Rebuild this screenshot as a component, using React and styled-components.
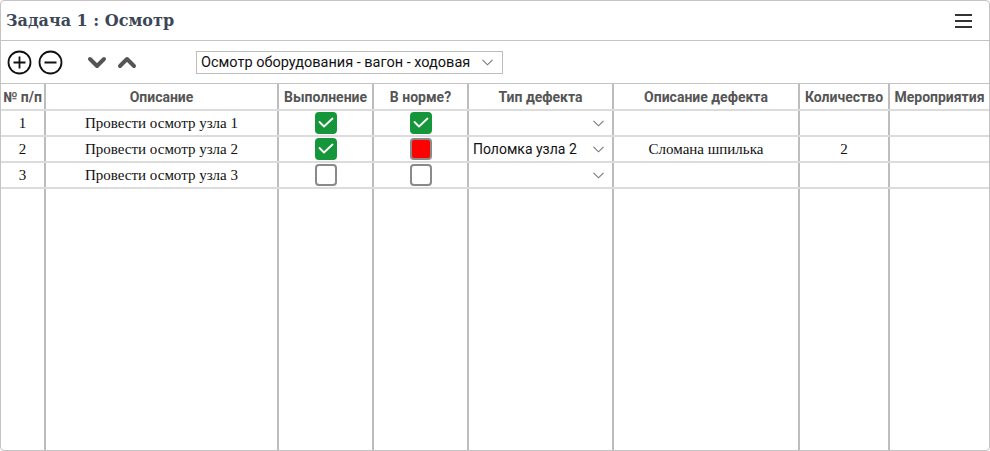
import React from 'react';
import styled, { createGlobalStyle } from 'styled-components';

const GlobalStyle = createGlobalStyle`
    html, body {
        margin: 0;
        padding: 0;
        background: #fff;
    }
    #root {
        height: 451px;
    }
`;

const Card = styled.section`
    box-sizing: border-box;
    height: 451px;
    width: 990px;
    border: 1px solid #c4c4c4;
    border-radius: 4px;
    display: flex;
    flex-direction: column;
    overflow: hidden;
`;

const Header = styled.header`
    height: 39px;
    display: flex;
    align-items: center;
    justify-content: space-between;
    padding: 0 17px 0 5px;
    border-bottom: 1px solid #c4c4c4;
`;

const Title = styled.h1`
    margin: 0;
    font-family: "DejaVu Serif", serif;
    font-size: 16px;
    font-weight: bold;
    color: #3b4756;
`;

const MenuButton = styled.div`
    width: 17px;
    display: flex;
    flex-direction: column;
    gap: 4px;
    padding-top: 1px;

    span {
        height: 2px;
        background: #333;
    }
`;

const Toolbar = styled.div`
    height: 42px;
    display: flex;
    align-items: center;
    padding: 0 6px;
`;

const IconButton = styled.button`
    border: none;
    background: none;
    padding: 0;
    margin-right: ${p => p.$gap || 0}px;
    display: flex;
    color: ${p => p.$color || '#111'};
    cursor: pointer;
`;

const Select = styled.div`
    box-sizing: border-box;
    width: ${p => p.$width || '100%'};
    height: ${p => p.$height || 23}px;
    display: flex;
    align-items: center;
    padding: 0 ${p => p.$pad || 9}px 0 ${p => p.$lpad || 4}px;
    border: ${p => (p.$bordered ? '1px solid #bdbdbd' : 'none')};
    font-family: Roboto, "Liberation Sans", sans-serif;
    font-size: ${p => p.$size || 13}px;
    color: #111;
    background: #fff;
    margin-left: ${p => p.$offset || 0}px;

    svg {
        margin-left: auto;
    }
`;

const TableWrap = styled.div`
    flex: 1;
    display: flex;
    border-top: 1px solid #c4c4c4;
`;

const Table = styled.table`
    width: 100%;
    height: 100%;
    border-collapse: collapse;
    table-layout: fixed;
`;

const Th = styled.th`
    height: 25px;
    padding: 0;
    font-family: Roboto, "Liberation Sans", sans-serif;
    font-size: 14px;
    font-weight: bold;
    color: #555;
    border-left: 2px solid #bdbdbd;
    border-bottom: 2px solid #dcdcdc;
    white-space: nowrap;

    &:first-child {
        border-left: none;
    }
`;

const Td = styled.td`
    height: 24px;
    padding: 0;
    text-align: center;
    vertical-align: middle;
    font-family: "Liberation Serif", "DejaVu Serif", serif;
    font-size: 15px;
    color: #111;
    border-left: 2px solid #bdbdbd;
    border-bottom: 2px solid #dcdcdc;

    &:first-child {
        border-left: none;
    }
`;

const FillerCell = styled(Td)`
    height: auto;
    border-bottom: none;
`;

const Check = styled.span`
    box-sizing: border-box;
    display: inline-flex;
    align-items: center;
    justify-content: center;
    width: 22px;
    height: 22px;
    border-radius: 4px;
    vertical-align: middle;
    background: ${p => (p.$state === 'on' ? '#16963b' : p.$state === 'bad' ? '#ff0000' : '#fff')};
    border: 2px solid ${p => (p.$state === 'on' ? '#16963b' : '#8a8a8a')};
`;

const CircleIcon = ({ minus }) => (
    <svg width="25" height="25" viewBox="0 0 25 25" fill="none" stroke="currentColor" strokeWidth="1.8">
        <circle cx="12.5" cy="12.5" r="11" />
        <line x1="6.5" y1="12.5" x2="18.5" y2="12.5" />
        {!minus && <line x1="12.5" y1="6.5" x2="12.5" y2="18.5" />}
    </svg>
);

const ChevronIcon = ({ up }) => (
    <svg width="20" height="14" viewBox="0 0 20 14" fill="none" stroke="currentColor" strokeWidth="4" strokeLinecap="round" strokeLinejoin="round">
        {up ? <polyline points="3,11 10,4 17,11" /> : <polyline points="3,4 10,11 17,4" />}
    </svg>
);

const SmallChevron = () => (
    <svg width="11" height="7" viewBox="0 0 11 7" fill="none" stroke="#777" strokeWidth="1.1">
        <polyline points="0.5,0.8 5.5,5.8 10.5,0.8" />
    </svg>
);

const Tick = () => (
    <svg width="16" height="12" viewBox="0 0 16 12" fill="none" stroke="#fff" strokeWidth="1.8" strokeLinecap="round" strokeLinejoin="round">
        <polyline points="1.5,5 6,9.5 14.5,1.5" />
    </svg>
);

const columns = [
    { title: '№ п/п', width: 44 },
    { title: 'Описание', width: 233 },
    { title: 'Выполнение', width: 95 },
    { title: 'В норме?', width: 95 },
    { title: 'Тип дефекта', width: 145 },
    { title: 'Описание дефекта', width: 186 },
    { title: 'Количество', width: 90 },
    { title: 'Мероприятия', width: 100 },
];

const rows = [
    { n: 1, text: 'Провести осмотр узла 1', done: 'on', ok: 'on', type: '', desc: '', qty: '' },
    { n: 2, text: 'Провести осмотр узла 2', done: 'on', ok: 'bad', type: 'Поломка узла 2', desc: 'Сломана шпилька', qty: '2' },
    { n: 3, text: 'Провести осмотр узла 3', done: 'off', ok: 'off', type: '', desc: '', qty: '' },
];

export default function App() {
    return (
        <>
            <GlobalStyle />
            <Card>
                <Header>
                    <Title>Задача 1 : Осмотр</Title>
                    <MenuButton>
                        <span />
                        <span />
                        <span />
                    </MenuButton>
                </Header>
                <Toolbar>
                    <IconButton $gap={6}><CircleIcon /></IconButton>
                    <IconButton $gap={24}><CircleIcon minus /></IconButton>
                    <IconButton $gap={10} $color="#555"><ChevronIcon /></IconButton>
                    <IconButton $color="#555"><ChevronIcon up /></IconButton>
                    <Select $bordered $width="307px" $offset={59} $pad={9} $size={14.5}>
                        Осмотр оборудования - вагон - ходовая
                        <SmallChevron />
                    </Select>
                </Toolbar>
                <TableWrap>
                    <Table>
                        <colgroup>
                            {columns.map(c => (
                                <col key={c.title} style={{ width: c.width }} />
                            ))}
                        </colgroup>
                        <thead>
                            <tr>
                                {columns.map(c => (
                                    <Th key={c.title}>{c.title}</Th>
                                ))}
                            </tr>
                        </thead>
                        <tbody>
                            {rows.map(r => (
                                <tr key={r.n}>
                                    <Td>{r.n}</Td>
                                    <Td>{r.text}</Td>
                                    <Td>
                                        <Check $state={r.done}>{r.done === 'on' && <Tick />}</Check>
                                    </Td>
                                    <Td>
                                        <Check $state={r.ok}>{r.ok === 'on' && <Tick />}</Check>
                                    </Td>
                                    <Td>
                                        <Select $size={14} $pad={8} $height={24}>
                                            {r.type}
                                            <SmallChevron />
                                        </Select>
                                    </Td>
                                    <Td>{r.desc}</Td>
                                    <Td>{r.qty}</Td>
                                    <Td />
                                </tr>
                            ))}
                            <tr>
                                {columns.map(c => (
                                    <FillerCell key={c.title} />
                                ))}
                            </tr>
                        </tbody>
                    </Table>
                </TableWrap>
            </Card>
        </>
    );
}
